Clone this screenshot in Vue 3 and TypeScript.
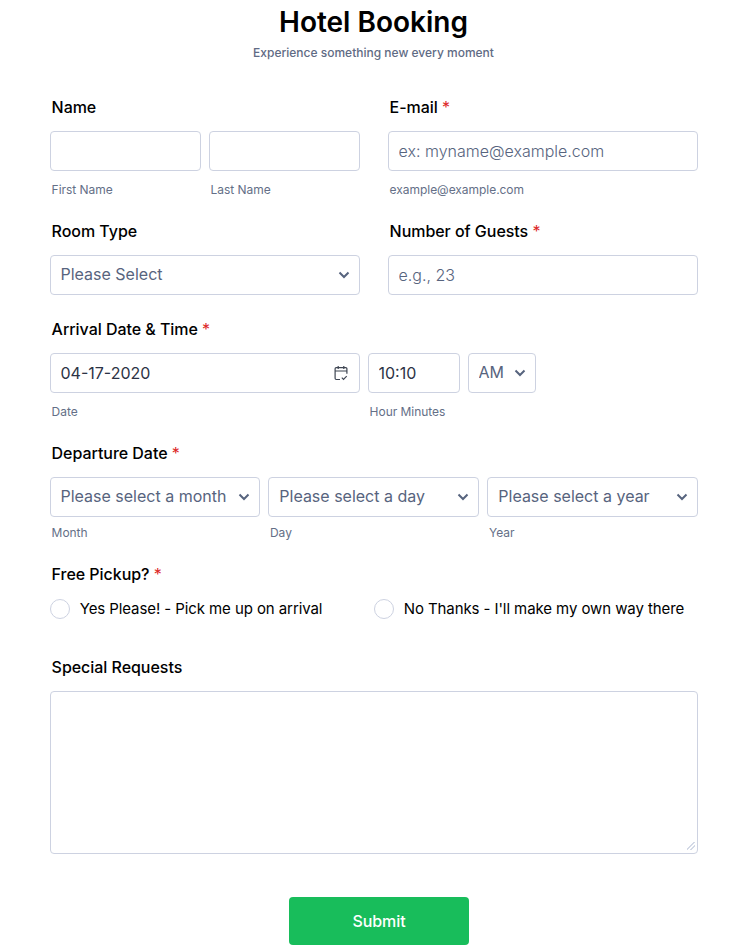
<script setup lang="ts">
import { ref } from "vue";

const fullName = ref({ first: "", last: "" });
const email = ref("");
const guests = ref("");
const arrival = ref({ date: "04-17-2020", time: "10:10", ampm: "AM" });
const pickup = ref("");
const requests = ref("");
const roomType = ref("");
const departure = ref({ month: "", day: "", year: "" });
</script>

<template>
  <form class="booking" @submit.prevent>
    <header class="head">
      <h1>Hotel Booking</h1>
      <p>Experience something new every moment</p>
    </header>

    <div class="cols row-name">
      <div class="field">
        <label class="label">Name</label>
        <div class="pair">
          <div>
            <input v-model="fullName.first" class="control" type="text" />
            <span class="sub">First Name</span>
          </div>
          <div>
            <input v-model="fullName.last" class="control" type="text" />
            <span class="sub">Last Name</span>
          </div>
        </div>
      </div>
      <div class="field">
        <label class="label">E-mail <em>*</em></label>
        <input v-model="email" class="control" type="text" placeholder="ex: myname@example.com" />
        <span class="sub">example@example.com</span>
      </div>
    </div>

    <div class="cols row-room">
      <div class="field">
        <label class="label">Room Type</label>
        <div class="select-wrap">
          <select v-model="roomType" class="control select">
            <option value="">Please Select</option>
          </select>
          <svg class="chevron" viewBox="0 0 12 8" width="12" height="8"><path d="M1.5 1.5 6 6l4.5-4.5" /></svg>
        </div>
      </div>
      <div class="field">
        <label class="label">Number of Guests <em>*</em></label>
        <input v-model="guests" class="control guests" type="text" placeholder="e.g., 23" />
      </div>
    </div>

    <div class="field row-arrival">
      <label class="label">Arrival Date &amp; Time <em>*</em></label>
      <div class="arrival">
        <div class="date">
          <div class="select-wrap">
            <input v-model="arrival.date" class="control filled" type="text" />
            <svg class="calendar" viewBox="0 0 16 16" width="16" height="16">
              <path d="M7 14.500H3.300a1.200 1.200 0 0 1-1.200-1.200V3.800a1.200 1.200 0 0 1 1.200-1.200h9.400a1.200 1.200 0 0 1 1.200 1.200v5M2.100 6h11.800M5.200 1v3M10.800 1v3M8.800 12.600l1.700 1.700 3.200-3.200" />
            </svg>
          </div>
          <span class="sub">Date</span>
        </div>
        <div class="time">
          <input v-model="arrival.time" class="control filled" type="text" />
          <span class="sub">Hour Minutes</span>
        </div>
        <div class="ampm select-wrap">
          <select v-model="arrival.ampm" class="control select">
            <option>AM</option>
            <option>PM</option>
          </select>
          <svg class="chevron" viewBox="0 0 12 8" width="12" height="8"><path d="M1.5 1.5 6 6l4.5-4.5" /></svg>
        </div>
      </div>
    </div>

    <div class="field row-departure">
      <label class="label">Departure Date <em>*</em></label>
      <div class="triple">
        <div>
          <div class="select-wrap">
            <select v-model="departure.month" class="control select">
              <option value="">Please select a month</option>
            </select>
            <svg class="chevron" viewBox="0 0 12 8" width="12" height="8"><path d="M1.5 1.5 6 6l4.5-4.5" /></svg>
          </div>
          <span class="sub tight">Month</span>
        </div>
        <div>
          <div class="select-wrap">
            <select v-model="departure.day" class="control select">
              <option value="">Please select a day</option>
            </select>
            <svg class="chevron" viewBox="0 0 12 8" width="12" height="8"><path d="M1.5 1.5 6 6l4.5-4.5" /></svg>
          </div>
          <span class="sub tight">Day</span>
        </div>
        <div>
          <div class="select-wrap">
            <select v-model="departure.year" class="control select">
              <option value="">Please select a year</option>
            </select>
            <svg class="chevron" viewBox="0 0 12 8" width="12" height="8"><path d="M1.5 1.5 6 6l4.5-4.5" /></svg>
          </div>
          <span class="sub tight">Year</span>
        </div>
      </div>
    </div>

    <div class="field row-pickup">
      <label class="label">Free Pickup? <em>*</em></label>
      <div class="radios">
        <label class="radio">
          <input v-model="pickup" type="radio" name="pickup" value="yes" />
          <span>Yes Please! - Pick me up on arrival</span>
        </label>
        <label class="radio">
          <input v-model="pickup" type="radio" name="pickup" value="no" />
          <span>No Thanks - I'll make my own way there</span>
        </label>
      </div>
    </div>

    <div class="field">
      <label class="label">Special Requests</label>
      <textarea v-model="requests" class="control area"></textarea>
    </div>

    <div class="actions">
      <button type="submit" class="submit">Submit</button>
    </div>
  </form>
</template>

<style scoped>
.booking {
  box-sizing: border-box;
  width: 750px;
  height: 949px;
  padding: 0 52px 0 50px;
  overflow: hidden;
  background: #fff;
  font-family: Inter, "Noto Sans", sans-serif;
  color: #2c3345;
}

.head {
  height: 95px;
  margin-left: -1px;
  text-align: center;
}

.head h1 {
  margin: 0;
  padding-top: 4px;
  color: #000;
  font-size: 28px;
  font-weight: 600;
  line-height: 36px;
}

.head p {
  margin: 4px 0 0;
  color: #5f6b84;
  font-size: 12px;
  font-weight: 500;
  line-height: 18px;
}

.cols {
  display: grid;
  grid-template-columns: 310px 310px;
  gap: 28px;
}

.field {
  min-width: 0;
}

.row-name {
  margin-bottom: 19px;
}

.row-room {
  margin-bottom: 22px;
}

.row-arrival {
  margin-bottom: 19px;
}

.row-departure {
  margin-bottom: 19px;
}

.row-pickup {
  margin-bottom: 35px;
}

.label {
  display: block;
  height: 24px;
  margin-bottom: 12px;
  padding-left: 1.600px;
  color: #000;
  font-size: 16px;
  font-weight: 500;
  letter-spacing: -0.040px;
  line-height: 24px;
}

.label em {
  color: #dc2626;
  font-style: normal;
  font-weight: 400;
}

.control {
  display: block;
  box-sizing: border-box;
  width: 100%;
  height: 40px;
  margin: 0;
  padding: 0 9.500px;
  border: 1px solid #cdd2e1;
  border-radius: 4px;
  outline: none;
  background: #fff;
  color: #57647e;
  font-family: inherit;
  font-size: 16px;
}

.control::placeholder {
  color: #57647e;
  font-weight: 300;
}

.guests {
  padding-bottom: 1px;
}

.control.filled {
  color: #2c3345;
}

.select {
  appearance: none;
  padding-right: 30px;
  padding-bottom: 2px;
}

.select-wrap {
  position: relative;
}

.chevron {
  position: absolute;
  top: 16px;
  right: 10px;
  pointer-events: none;
  fill: none;
  stroke: #57647e;
  stroke-width: 2;
}

.calendar {
  position: absolute;
  top: 12px;
  right: 11px;
  pointer-events: none;
  fill: none;
  stroke: #3f4653;
  stroke-width: 1.200;
}

.sub {
  display: block;
  margin-top: 9px;
  padding-left: 1.600px;
  color: #646f87;
  font-size: 12px;
  letter-spacing: -0.040px;
  line-height: 20px;
}

.sub.tight {
  margin-top: 6px;
}

.pair {
  display: grid;
  grid-template-columns: 151px 151px;
  gap: 8px;
}

.arrival {
  display: flex;
  gap: 8px;
}

.date {
  width: 310px;
}

.time {
  width: 92px;
}

.ampm {
  width: 68px;
  height: 40px;
}

.triple {
  display: grid;
  grid-template-columns: 210px 211px 211px;
  gap: 8px;
}

.triple > div + div .select {
  padding-left: 10.300px;
}

.triple > div + div .sub {
  padding-left: 2px;
}

.radios {
  display: grid;
  grid-template-columns: 324px 324px;
}

.radio {
  display: flex;
  align-items: center;
  gap: 9.700px;
  height: 22px;
  color: #000;
  font-size: 15px;
  letter-spacing: -0.085px;
}

.radio span {
  margin-top: -2px;
}

.radio input {
  appearance: none;
  flex: none;
  width: 20px;
  height: 20px;
  margin: 0;
  border: 1px solid #cdd2e1;
  border-radius: 50%;
  background: #fff;
}

.area {
  height: 163px;
  padding: 8px 10px;
  resize: vertical;
}

.area::-webkit-resizer {
  background: linear-gradient(135deg, transparent 40%, #d3d9e6 40%, #d3d9e6 54%, transparent 54%, transparent 66%, #d3d9e6 66%, #d3d9e6 80%, transparent 80%) 5px 4px / 8px 8px no-repeat;
}

.actions {
  display: flex;
  justify-content: center;
  margin-top: 43px;
  padding-left: 10px;
}

.submit {
  width: 180px;
  height: 48px;
  border: 0;
  border-radius: 4px;
  background: #18bd5b;
  color: #fff;
  font-family: inherit;
  font-size: 16px;
  font-weight: 500;
  letter-spacing: -0.060px;
}
</style>
